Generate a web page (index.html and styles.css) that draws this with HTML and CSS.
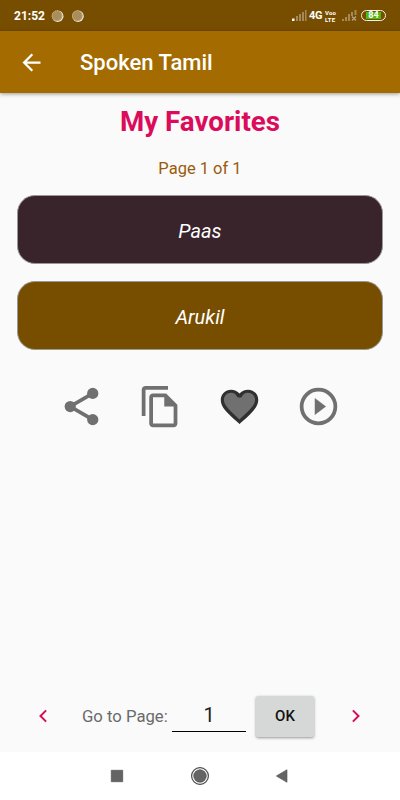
FILE: index.html
```html
<!DOCTYPE html>
<html lang="en">
<head>
<meta charset="utf-8">
<title>Spoken Tamil</title>
<link rel="stylesheet" href="styles.css">
</head>
<body>
<div class="status">
  <span class="clock">21:52</span>
  <svg class="dots" viewBox="0 0 34 14"><g fill="#e8e4dc"><circle cx="6.7" cy="7.2" r="5.8"/><circle cx="27" cy="7.2" r="5.8"/></g><g fill="#aa8d59"><circle cx="6" cy="6.7" r="5.3"/><circle cx="26.3" cy="6.7" r="5.3"/></g><g fill="none" stroke="#c8b48f" stroke-dasharray="1 1"><circle cx="6" cy="6.7" r="4.8"/><circle cx="26.3" cy="6.7" r="4.8"/></g></svg>
  <div class="signals">
    <svg class="bars" viewBox="0 0 15 11"><path fill="#fff" d="M0 8.5h2.5V11H0z"/><path fill="#a5895a" d="M4 6h2v5H4zM7 4h2v7H7zM10 2h2v9h-2zM13 0h1.5v11H13z"/></svg>
    <span class="network">4G</span>
    <span class="volte"><span>Voo</span><span>LTE</span></span>
    <svg class="bars second" viewBox="0 0 15 11"><path fill="#a5895a" d="M0 9h2v2H0zM3 7h2v4H3zM6 4h2v7H6zM9 2h2v4H9zM12.5 0h2v5h-2z"/><path fill="none" stroke="#b8a382" stroke-width="1.3" d="M10 6.5l4 4m0-4l-4 4"/></svg>
    <span class="battery"><span>84</span></span>
  </div>
</div>
<header class="appbar">
  <svg class="back" viewBox="0 0 24 24"><path fill="#fff" d="M20 11H7.83l5.59-5.59L12 4l-8 8 8 8 1.41-1.41L7.83 13H20z"/></svg>
  <span class="title">Spoken Tamil</span>
</header>
<main>
  <h1>My Favorites</h1>
  <p class="count">Page 1 of 1</p>
  <div class="card dark"><span>Paas</span></div>
  <div class="card brown"><span>Arukil</span></div>
  <div class="actions">
    <svg viewBox="0 0 24 24"><path d="M18 5L6 12l12 7" fill="none" stroke="#707070" stroke-width="2"/><circle cx="18" cy="5" r="3"/><circle cx="6" cy="12" r="3"/><circle cx="18" cy="19" r="3"/></svg>
    <svg viewBox="0 0 24 24"><path d="M16 1H4c-1.1 0-2 .9-2 2v14h2V3h12z"/><path fill-rule="evenodd" d="M15 5H8c-1.1 0-2 .9-2 2v14c0 1.1.9 2 2 2h11c1.1 0 2-.9 2-2V11zM8 7h6v5h5v9H8z"/></svg>
    <svg viewBox="0 0 24 24"><path fill="#303030" d="M12 21.35l-1.45-1.32C5.4 15.36 2 12.28 2 8.5 2 5.42 4.42 3 7.5 3c1.74 0 3.41.81 4.5 2.09C13.09 3.81 14.76 3 16.5 3 19.58 3 22 5.42 22 8.5c0 3.78-3.4 6.86-8.55 11.54z"/><path d="M12 18.9l-.1-.1C7.14 14.24 3.7 11.49 3.7 8.5c0-2.1 1.6-3.8 3.8-3.8 1.54 0 2.94 1.09 3.57 2.56h1.86C13.56 5.79 14.96 4.7 16.5 4.7c2.2 0 3.8 1.7 3.8 3.8 0 2.99-3.44 5.74-8.2 10.3z"/></svg>
    <svg viewBox="0 0 24 24"><circle cx="12" cy="12" r="9" fill="none" stroke="#707070" stroke-width="2"/><path d="M10 7.5v9l6-4.5z"/></svg>
  </div>
</main>
<footer class="pager">
  <svg class="chev" viewBox="0 0 10 14"><path d="M8.1 1.4L2.5 7l5.6 5.6"/></svg>
  <span class="goto">Go to Page:</span>
  <span class="field">1</span>
  <button type="button">OK</button>
  <svg class="chev next" viewBox="0 0 10 14"><path d="M1.9 1.4L7.5 7l-5.6 5.6"/></svg>
</footer>
<nav>
  <svg viewBox="0 0 20 20"><path fill="#646464" stroke="#505050" stroke-width=".7" d="M4.3 4.3h11.4v11.4H4.3z"/></svg>
  <svg viewBox="0 0 20 20"><circle cx="10" cy="10" r="8.4" fill="none" stroke="#484848" stroke-width="1.2"/><circle cx="10" cy="10" r="6.3" fill="#646464" stroke="#484848" stroke-width=".6"/></svg>
  <svg viewBox="0 0 20 20"><path fill="#646464" stroke="#505050" stroke-width=".6" d="M15 3.7v12.6L4.3 10z"/></svg>
</nav>
</body>
</html>
```
FILE: styles.css
```css
* { box-sizing: border-box; }
body {
  margin: 0;
  height: 800px;
  display: flex;
  flex-direction: column;
  overflow: hidden;
  background: #fafafa;
  font-family: Roboto, sans-serif;
}
svg { display: block; flex: none; }
.status {
  height: 31px;
  flex: none;
  display: flex;
  align-items: center;
  padding: 0 14px;
  background: #774e00;
  color: #fff;
}
.clock { width: 37px; font-size: 12px; line-height: 14px; font-weight: 700; }
.dots { width: 34px; height: 14px; }
.signals { margin-left: auto; display: flex; align-items: center; }
.bars { width: 15px; height: 11px; }
.network { width: 16px; margin-left: 2px; font-size: 11px; font-weight: 700; letter-spacing: -.3px; }
.volte { width: 13px; display: flex; flex-direction: column; font-size: 6px; line-height: 7px; font-weight: 700; letter-spacing: .2px; }
.second { margin-left: 4px; }
.battery {
  width: 25px;
  height: 11px;
  margin-left: 4px;
  padding: 1px 4px;
  border: 1px solid #f4f0e8;
  border-radius: 6px;
  font-size: 9px;
  line-height: 7px;
  font-weight: 700;
  text-align: center;
}
.battery span { display: block; background: #48bd12; }
.appbar {
  height: 62px;
  flex: none;
  display: flex;
  align-items: center;
  padding-left: 17.5px;
  background: #a46b00;
  color: #fff;
  box-shadow: 0 1px 4px rgba(0, 0, 0, .4);
}
.back { width: 27px; height: 27px; }
.title { margin-left: 35.5px; font-size: 22px; font-weight: 500; }
main { flex: 1; padding: 0 17px; text-align: center; }
h1 { margin: 13px 0 0; font-size: 27.7px; line-height: 32px; font-weight: 700; color: #db0c5b; }
.count { margin: 21px 0 16px; font-size: 16.5px; line-height: 20px; color: #9a5c0b; }
.card {
  height: 69px;
  margin-bottom: 17px;
  padding-top: 2px;
  display: flex;
  align-items: center;
  justify-content: center;
  border: 1px solid #999;
  border-radius: 18px;
  color: #fff;
  font-size: 20px;
  font-style: italic;
}
.dark { background: #39242c; }
.brown { background: #774e00; }
.actions { display: flex; justify-content: space-between; padding: 0 42px; margin-top: 34px; fill: #707070; }
.actions svg { width: 45px; height: 45px; }
.pager { height: 72px; flex: none; display: flex; align-items: center; padding-left: 38px; }
.chev { width: 10px; height: 14px; fill: none; stroke: #d80b58; stroke-width: 2; }
.goto { width: 90px; margin-left: 34px; font-size: 16.7px; color: #6a6a6a; white-space: nowrap; }
.field { width: 74px; height: 31px; border-bottom: 1px solid #000; font-size: 20px; line-height: 29px; text-align: center; color: #222; }
.pager button {
  width: 58px;
  height: 41px;
  margin-left: 10px;
  padding: 0;
  border: 0;
  border-radius: 2px;
  background: #d6d8d7;
  box-shadow: 0 1px 3px rgba(0, 0, 0, .4);
  font: 500 15px Roboto, sans-serif;
  color: #111;
}
.next { margin-left: 37px; }
nav { height: 48px; flex: none; display: flex; justify-content: space-between; align-items: center; padding: 0 108px 0 107px; background: #fff; }
nav svg { width: 20px; height: 20px; }
```
